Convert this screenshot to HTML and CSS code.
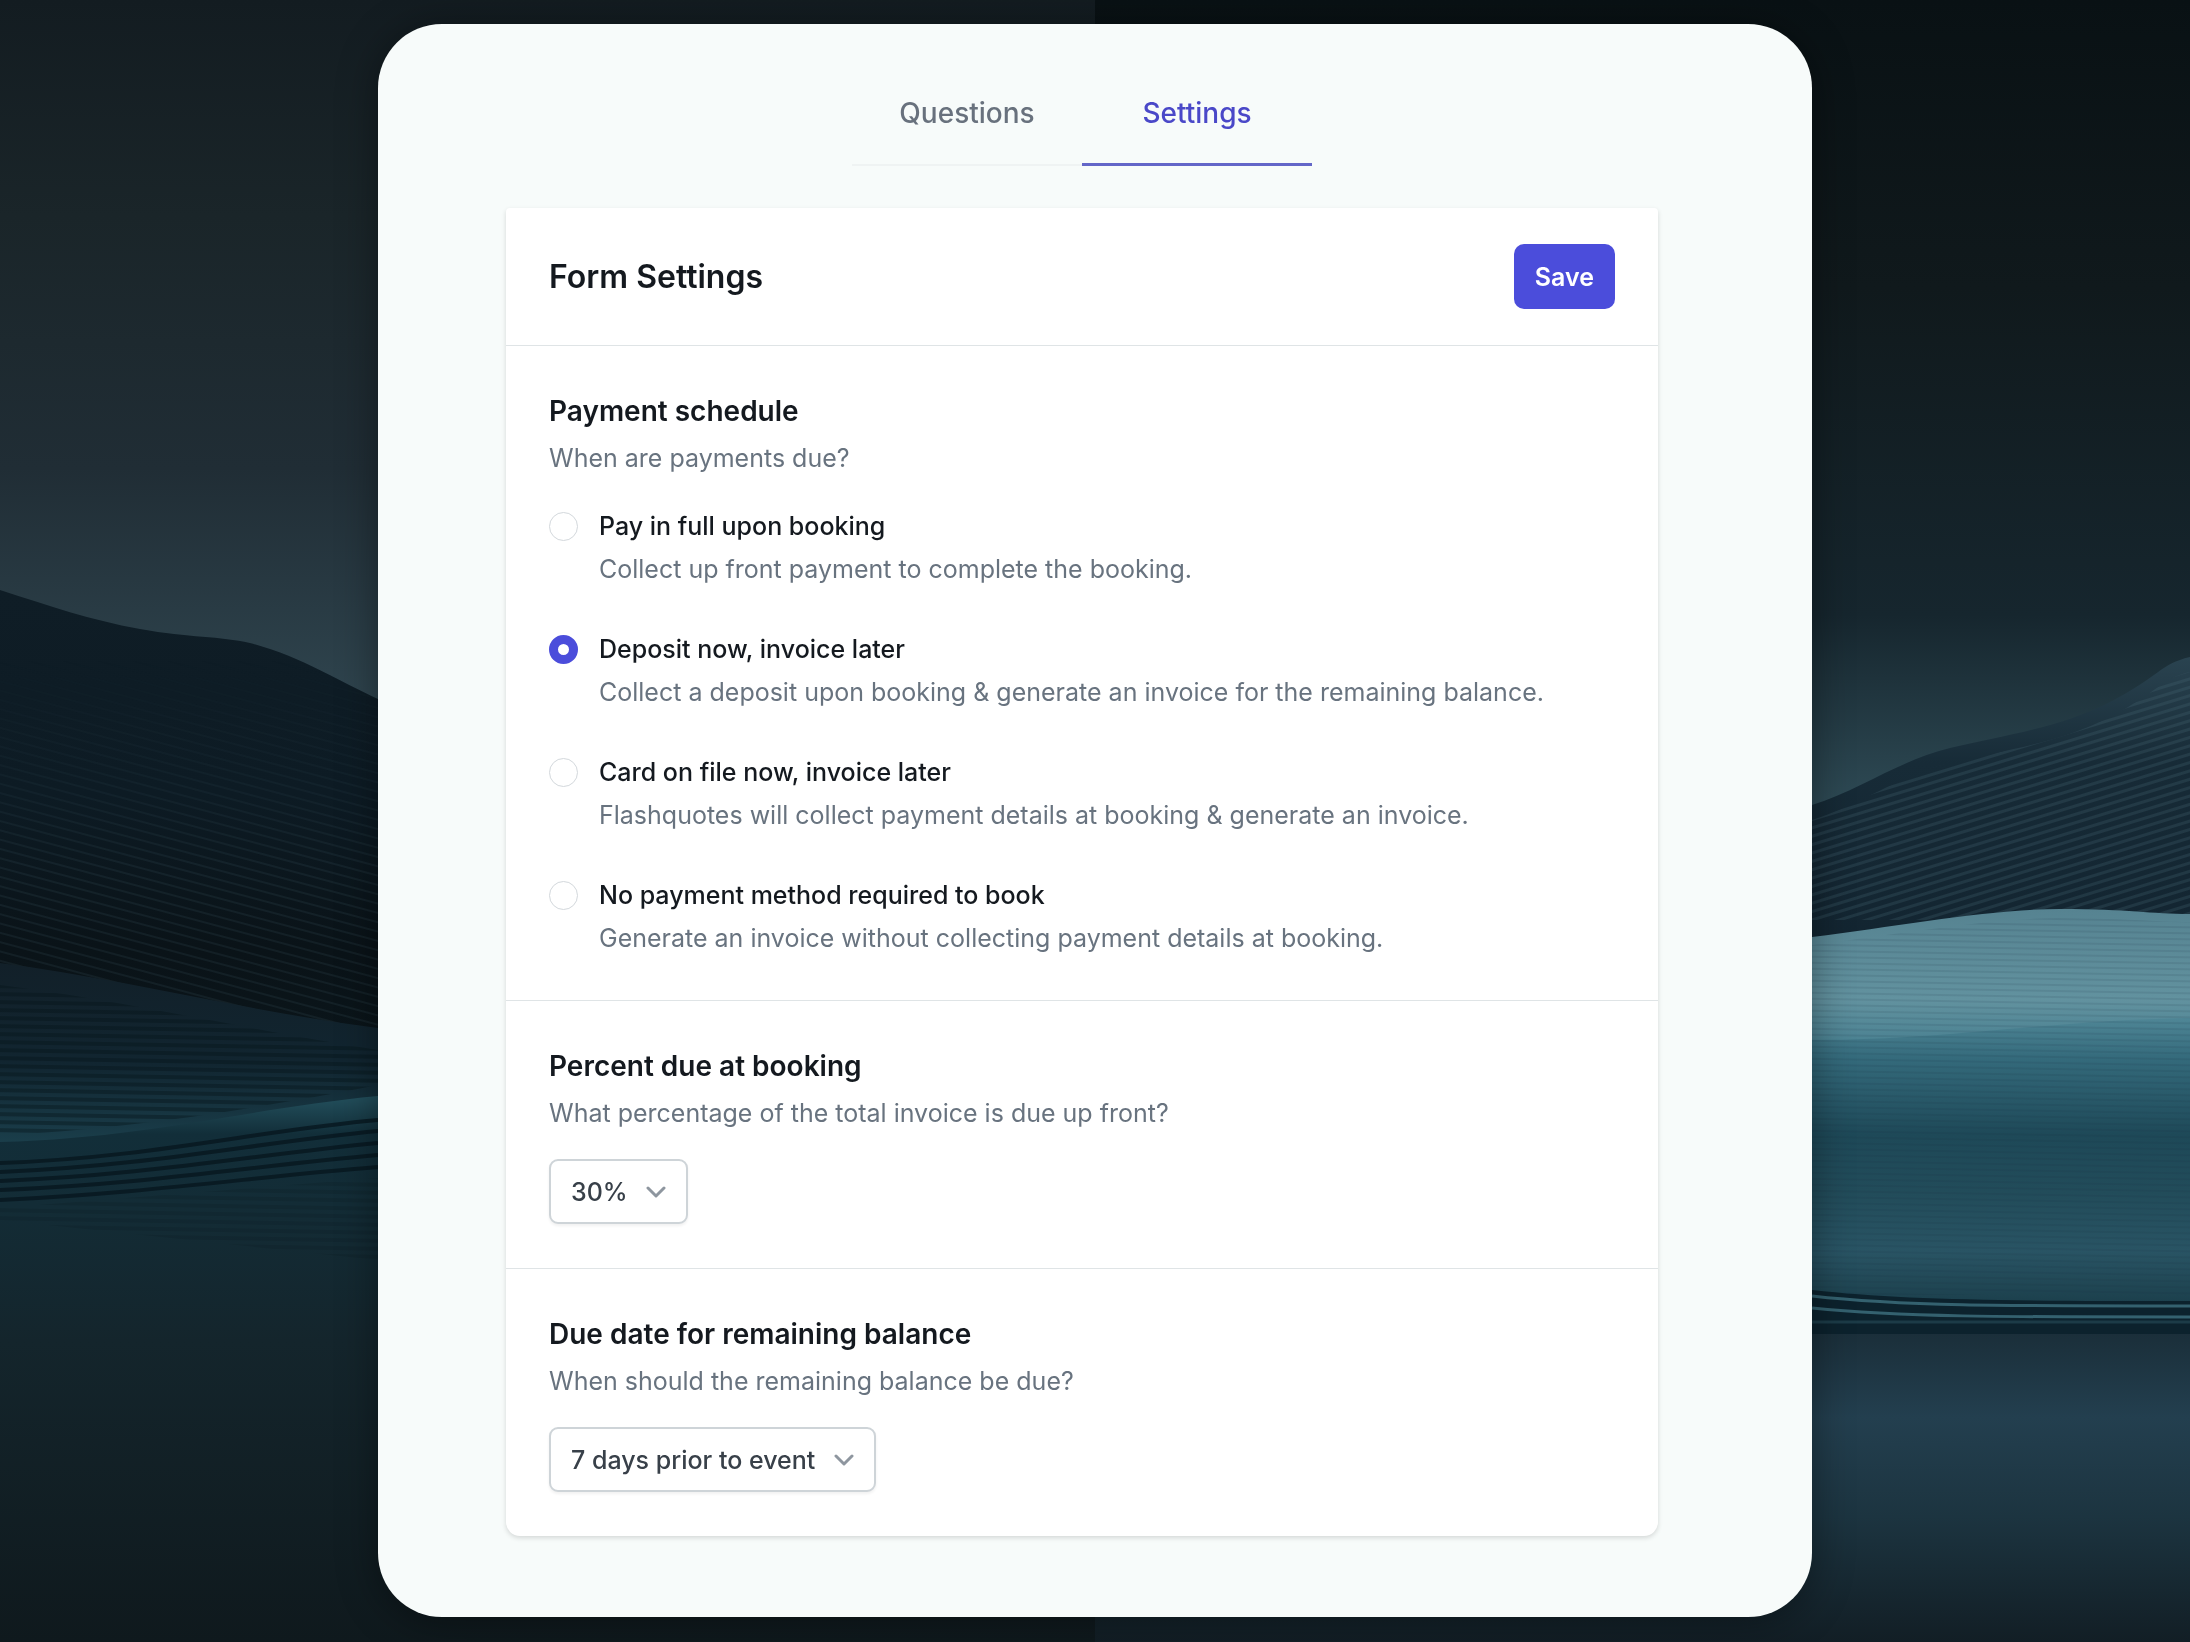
FILE: index.html
```html
<!DOCTYPE html>
<html lang="en">
<head>
    <meta charset="UTF-8">
    <meta name="viewport" content="width=device-width, initial-scale=1">
    <title>Form Settings</title>
    <link rel="stylesheet" href="styles.css">
</head>
<body>
    <!-- dunes behind the panel -->
    <svg class="backdrop" viewBox="0 0 2190 1642" preserveAspectRatio="xMidYMid slice" aria-hidden="true">
        <defs>
            <linearGradient id="skyLeft" x1="0" y1="0" x2="0" y2="1">
                <stop offset="0" stop-color="#131c21"/>
                <stop offset="0.3" stop-color="#1a2529"/>
                <stop offset="0.65" stop-color="#202d35"/>
                <stop offset="1" stop-color="#304650"/>
            </linearGradient>
            <linearGradient id="skyRight" x1="0" y1="0" x2="0" y2="1">
                <stop offset="0" stop-color="#091114"/>
                <stop offset="0.35" stop-color="#10191c"/>
                <stop offset="0.75" stop-color="#16262e"/>
                <stop offset="1" stop-color="#304d58"/>
            </linearGradient>
            <linearGradient id="hillLeft" x1="0" y1="0" x2="0" y2="1">
                <stop offset="0" stop-color="#0f1d26"/>
                <stop offset="0.4" stop-color="#0d1b24"/>
                <stop offset="0.7" stop-color="#0a1318"/>
                <stop offset="1" stop-color="#0b161b"/>
            </linearGradient>
            <linearGradient id="duneLeft" x1="0" y1="0" x2="0" y2="1">
                <stop offset="0" stop-color="#122029"/>
                <stop offset="0.5" stop-color="#112530"/>
                <stop offset="1" stop-color="#1c4350"/>
            </linearGradient>
            <linearGradient id="floorLeft" x1="0" y1="0" x2="0" y2="1">
                <stop offset="0" stop-color="#23505d"/>
                <stop offset="0.07" stop-color="#122e39"/>
                <stop offset="0.2" stop-color="#132c36"/>
                <stop offset="0.45" stop-color="#14252c"/>
                <stop offset="1" stop-color="#0f191d"/>
            </linearGradient>
            <linearGradient id="hillRight" x1="0" y1="0" x2="0" y2="1">
                <stop offset="0" stop-color="#2a4350"/>
                <stop offset="0.35" stop-color="#172b37"/>
                <stop offset="1" stop-color="#122430"/>
            </linearGradient>
            <linearGradient id="duneRight" x1="0" y1="0" x2="0" y2="1">
                <stop offset="0" stop-color="#568391"/>
                <stop offset="0.6" stop-color="#62929f"/>
                <stop offset="0.88" stop-color="#4b8292"/>
                <stop offset="1" stop-color="#4b8292"/>
            </linearGradient>
            <linearGradient id="slopeRight" x1="0" y1="0" x2="0" y2="1">
                <stop offset="0" stop-color="#4f8696"/>
                <stop offset="0.14" stop-color="#346a7b"/>
                <stop offset="0.4" stop-color="#1e4958"/>
                <stop offset="0.6" stop-color="#224c5a"/>
                <stop offset="0.8" stop-color="#295464"/>
                <stop offset="1" stop-color="#1a3d49"/>
            </linearGradient>
            <linearGradient id="floorRight" x1="0" y1="0" x2="0" y2="1">
                <stop offset="0" stop-color="#1a2e39"/>
                <stop offset="0.28" stop-color="#233f4f"/>
                <stop offset="0.6" stop-color="#1c3440"/>
                <stop offset="1" stop-color="#121e25"/>
            </linearGradient>
            <pattern id="ripplesDown" width="40" height="9" patternUnits="userSpaceOnUse" patternTransform="rotate(15)">
                <rect width="40" height="2" fill="#3b5964" opacity="0.18"/>
            </pattern>
            <pattern id="ripplesFlat" width="40" height="8" patternUnits="userSpaceOnUse" patternTransform="rotate(1)">
                <rect width="40" height="4" fill="#06131a" opacity="0.4"/>
            </pattern>
            <pattern id="ripplesUp" width="40" height="8" patternUnits="userSpaceOnUse" patternTransform="rotate(-17)">
                <rect width="40" height="3" fill="#4a6b78" opacity="0.24"/>
            </pattern>
            <pattern id="ripplesFine" width="40" height="6" patternUnits="userSpaceOnUse" patternTransform="rotate(1)">
                <rect width="40" height="2" fill="#0f2c38" opacity="0.1"/>
            </pattern>
            <linearGradient id="fade" x1="0" y1="0" x2="0" y2="1">
                <stop offset="0.15" stop-color="#000"/>
                <stop offset="0.6" stop-color="#fff"/>
            </linearGradient>
            <mask id="lowerHalf" maskContentUnits="objectBoundingBox">
                <rect width="1" height="1" fill="url(#fade)"/>
            </mask>
        </defs>

        <rect width="1095" height="720" fill="url(#skyLeft)"/>
        <rect x="1095" width="1095" height="820" fill="url(#skyRight)"/>

        <path fill="url(#hillLeft)" d="M0 590 C50 606 90 620 140 629 S220 636 250 643 C300 656 340 682 378 699 L1095 900 V1100 H0Z"/>
        <path fill="url(#ripplesDown)" mask="url(#lowerHalf)" d="M0 590 C50 606 90 620 140 629 S220 636 250 643 C300 656 340 682 378 699 V1050 H0Z"/>
        <path fill="url(#duneLeft)" d="M0 963 C120 978 250 1012 378 1028 H1095 V1160 H0Z"/>
        <path fill="url(#ripplesFlat)" d="M0 985 C120 1000 250 1030 378 1050 V1085 C250 1110 120 1130 0 1135Z"/>
        <path fill="url(#floorLeft)" d="M0 1142 C150 1138 250 1108 378 1096 H1095 V1642 H0Z"/>
        <g fill="none" stroke="#06151d" stroke-width="4" opacity="0.75">
            <path d="M0 1163 C150 1158 260 1130 378 1120"/>
            <path d="M0 1172 C150 1166 260 1142 378 1131"/>
            <path d="M0 1181 C150 1175 260 1154 378 1143"/>
            <path d="M0 1190 C150 1184 260 1165 378 1155"/>
            <path d="M0 1200 C150 1193 260 1176 378 1167"/>
        </g>
        <path fill="url(#ripplesFlat)" opacity="0.4" d="M0 1208 L378 1178 V1260 L0 1220Z"/>

        <path fill="url(#hillRight)" d="M1095 940 V900 L1812 805 C1860 790 1900 760 1950 748 S2060 728 2110 702 S2160 664 2190 657 V960 H1095Z"/>
        <path fill="url(#ripplesUp)" d="M1812 820 C1860 805 1900 775 1950 763 S2060 743 2110 717 S2160 679 2190 672 V920 H1812Z"/>
        <path fill="url(#duneRight)" d="M1095 950 L1812 937 C1900 926 1990 909 2060 909 S2150 914 2190 914 V1060 H1095Z"/>
        <path fill="url(#slopeRight)" d="M1095 1040 H1812 C1950 1040 2050 1020 2190 1018 V1310 H1095Z"/>
        <path fill="url(#ripplesFine)" d="M1812 945 C1900 934 1990 918 2060 918 S2150 922 2190 922 V1295 H1812Z"/>
        <rect x="1095" y="1330" width="1095" height="312" fill="url(#floorRight)"/>
        <path fill="#0c222d" d="M1095 1290 H1812 C1900 1300 2000 1301 2190 1301 V1334 H1095Z"/>
        <g fill="none" stroke="#34616f" stroke-width="3">
            <path d="M1812 1296 C1900 1306 2000 1306 2190 1306"/>
            <path d="M1812 1308 C1900 1317 2000 1317 2190 1317"/>
            <path d="M1812 1322 H2190" opacity="0.4"/>
        </g>
    </svg>

    <main class="panel">
        <nav class="tabs">
            <a class="tab" href="#questions">Questions</a>
            <a class="tab active" href="#settings" aria-current="page">Settings</a>
        </nav>

        <form class="card">
            <header class="card-header">
                <h1>Form Settings</h1>
                <button class="save" type="button">Save</button>
            </header>

            <section class="section">
                <h2 id="scheduleTitle">Payment schedule</h2>
                <p class="hint">When are payments due?</p>
                <div class="options" role="radiogroup" aria-labelledby="scheduleTitle">
                    <div class="option">
                        <input type="radio" name="schedule" id="payFull">
                        <label for="payFull">Pay in full upon booking</label>
                        <p>Collect up front payment to complete the booking.</p>
                    </div>
                    <div class="option">
                        <input type="radio" name="schedule" id="deposit" checked>
                        <label for="deposit">Deposit now, invoice later</label>
                        <p>Collect a deposit upon booking &amp; generate an invoice for the remaining balance.</p>
                    </div>
                    <div class="option">
                        <input type="radio" name="schedule" id="cardOnFile">
                        <label for="cardOnFile">Card on file now, invoice later</label>
                        <p>Flashquotes will collect payment details at booking &amp; generate an invoice.</p>
                    </div>
                    <div class="option">
                        <input type="radio" name="schedule" id="noPayment">
                        <label for="noPayment">No payment method required to book</label>
                        <p>Generate an invoice without collecting payment details at booking.</p>
                    </div>
                </div>
            </section>

            <section class="section">
                <h2><label for="percentDue">Percent due at booking</label></h2>
                <p class="hint">What percentage of the total invoice is due up front?</p>
                <div class="select">
                    <select id="percentDue">
                        <option>30%</option>
                    </select>
                    <svg class="chevron" viewBox="0 0 20 20" aria-hidden="true"><path d="M2 6l8 8 8-8"/></svg>
                </div>
            </section>

            <section class="section">
                <h2><label for="dueDate">Due date for remaining balance</label></h2>
                <p class="hint">When should the remaining balance be due?</p>
                <div class="select">
                    <select id="dueDate">
                        <option>7 days prior to event</option>
                    </select>
                    <svg class="chevron" viewBox="0 0 20 20" aria-hidden="true"><path d="M2 6l8 8 8-8"/></svg>
                </div>
            </section>
        </form>
    </main>
</body>
</html>
```
FILE: styles.css
```css
* {
    box-sizing: border-box;
}

body {
    margin: 0;
    padding: 24px;
    background-color: #10191d;
    font-family: Inter, "Liberation Sans", sans-serif;
    font-size: 25px;
    line-height: 36px;
    color: #14191f;
}

h1, h2, p {
    margin: 0;
}

.backdrop {
    position: fixed;
    inset: 0;
    width: 100%;
    height: 100%;
    z-index: -1;
}

.panel {
    max-width: 1434px;
    margin: 0 auto;
    padding: 68px 154px 81px 128px;
    background-color: #f7fbfa;
    border-radius: 64px;
    box-shadow: 0 4px 40px rgba(0, 0, 0, 0.4);
}

.tabs {
    display: flex;
    justify-content: center;
    margin-bottom: 42px;
}

.tab {
    width: 230px;
    padding-bottom: 29px;
    border-bottom: 2px solid #eff3f3;
    font-size: 28px;
    font-weight: 500;
    line-height: 42px;
    text-align: center;
    text-decoration: none;
    color: #68717d;
}

.tab.active {
    border-bottom: 3px solid #6366c8;
    color: #4a48c8;
}

.card {
    background-color: #fff;
    border-radius: 4px 4px 14px 14px;
    box-shadow: 0 2px 5px rgba(0, 0, 0, 0.14);
}

.card-header {
    display: flex;
    justify-content: space-between;
    align-items: center;
    padding: 36px 43px;
    border-bottom: 1px solid #dfe4e6;
}

h1 {
    font-size: 32px;
    font-weight: 600;
    line-height: 48px;
}

.save {
    height: 65px;
    padding: 0 21px;
    border: none;
    border-radius: 10px;
    background-color: #4b4ddb;
    color: #fff;
    font: inherit;
    font-weight: 600;
    cursor: pointer;
}

.section {
    padding: 44px 43px;
}

.section + .section {
    border-top: 1px solid #dfe4e6;
}

h2 {
    margin-bottom: 8px;
    font-size: 28px;
    font-weight: 600;
    line-height: 42px;
}

.hint, .option p {
    color: #68737f;
}

.options {
    display: grid;
    gap: 43px;
    margin-top: 32px;
}

.option {
    display: grid;
    grid-template-columns: 29px 1fr;
    gap: 7px 21px;
    align-items: center;
}

.option + .option {
    padding-top: 1px;
}

.option label {
    font-weight: 500;
}

.option p {
    grid-column: 2;
}

input[type="radio"] {
    appearance: none;
    width: 29px;
    height: 29px;
    margin: 0;
    border: 1px solid #d3d8dc;
    border-radius: 50%;
    background-color: #fff;
}

input[type="radio"]:checked {
    border: 9px solid #4b4ddb;
}

/* select and chevron share one cell */
.select {
    display: inline-grid;
    align-items: center;
    margin-top: 28px;
    vertical-align: top;
}

select {
    grid-area: 1 / 1;
    appearance: none;
    height: 65px;
    padding: 0 58px 0 20px;
    border: 2px solid #ced4d8;
    border-radius: 9px;
    background-color: #fff;
    box-shadow: 0 2px 3px rgba(0, 0, 0, 0.06);
    color: #384049;
    font: inherit;
    font-weight: 500;
}

.chevron {
    grid-area: 1 / 1;
    justify-self: end;
    width: 20px;
    height: 20px;
    margin-right: 22px;
    fill: none;
    stroke: #8e969f;
    stroke-width: 3;
    stroke-linecap: round;
    stroke-linejoin: round;
    pointer-events: none;
}
```
